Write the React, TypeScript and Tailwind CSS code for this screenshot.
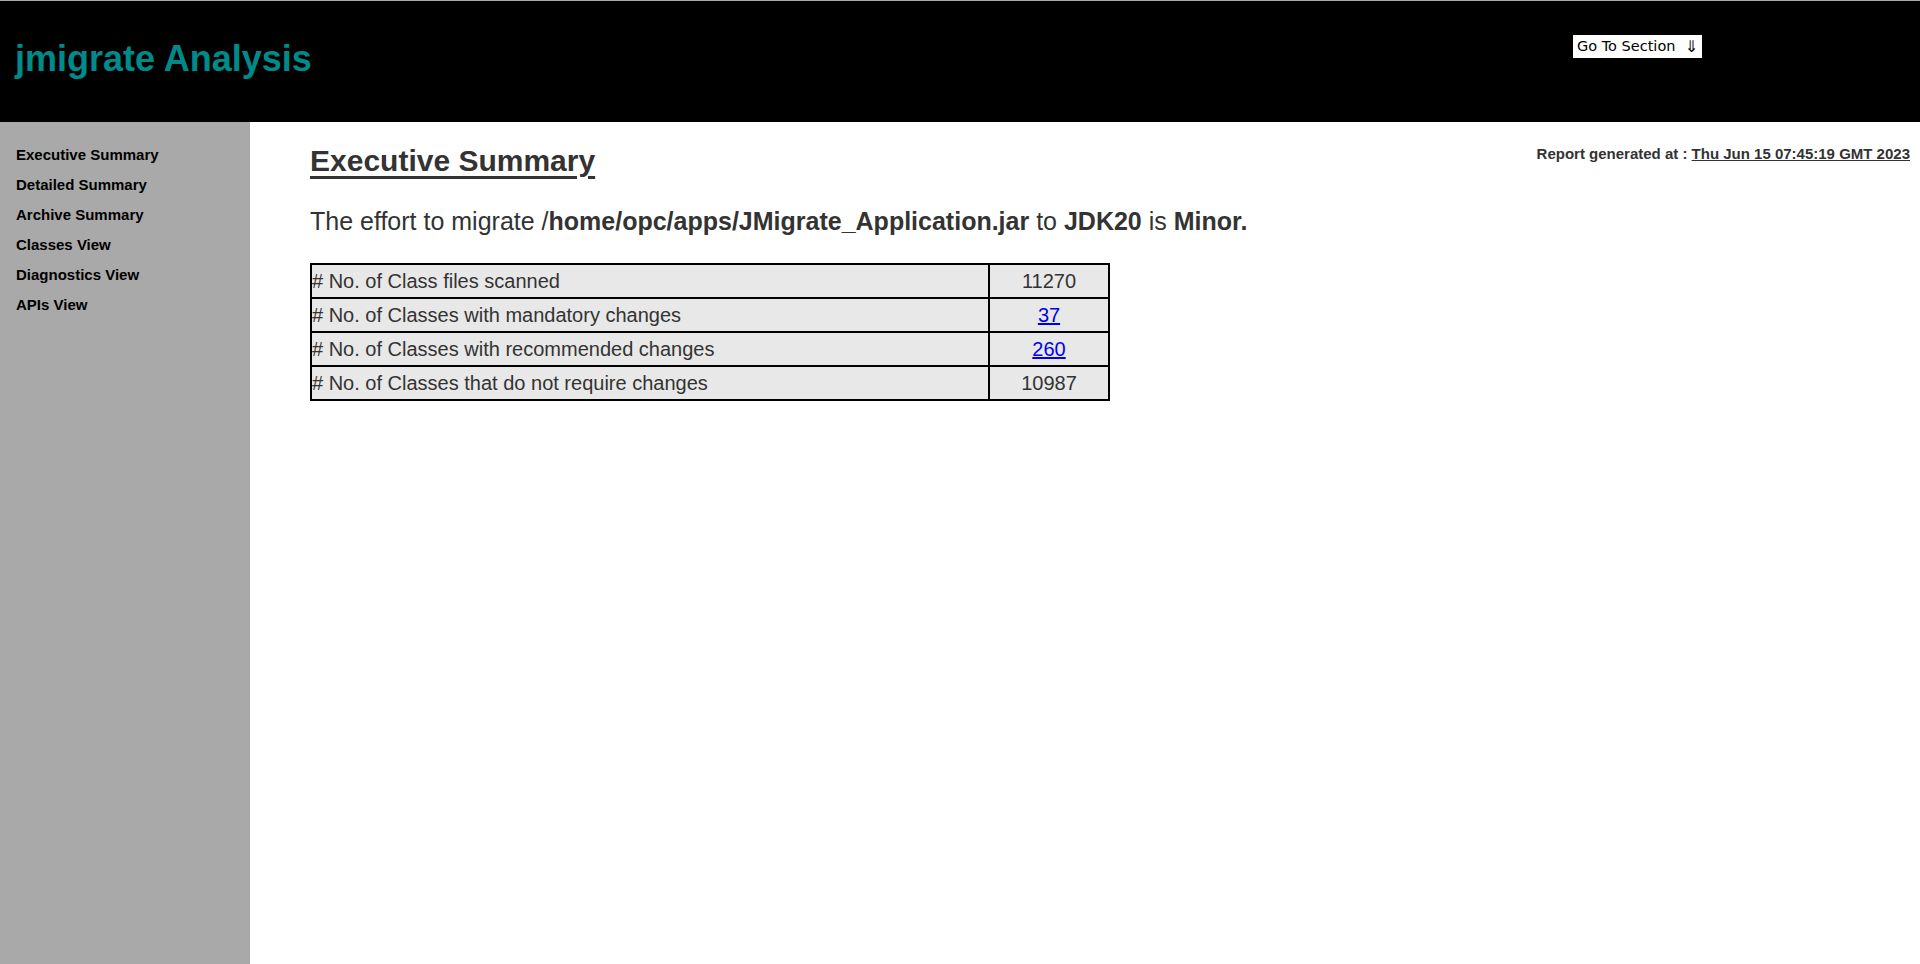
import React from 'react'

const navItems = [
  'Executive Summary',
  'Detailed Summary',
  'Archive Summary',
  'Classes View',
  'Diagnostics View',
  'APIs View',
]

const rows: { label: string; value: string; link?: boolean }[] = [
  { label: '# No. of Class files scanned', value: '11270' },
  { label: '# No. of Classes with mandatory changes', value: '37', link: true },
  { label: '# No. of Classes with recommended changes', value: '260', link: true },
  { label: '# No. of Classes that do not require changes', value: '10987' },
]

const App = () => {
  return (
    <div className="w-[1920px] h-[964px] flex flex-col overflow-hidden bg-white font-['Liberation_Sans',Arial,sans-serif]">
      {/* header */}
      <div className="h-[122px] bg-black border-t border-[#a9a9a9] flex items-start px-[15px] pt-[36px] shrink-0">
        <h1 className="text-[36px] leading-[43px] font-bold text-[#008b8b]">jmigrate Analysis</h1>
        <div className="ml-auto mr-[203px] -mt-[2px] h-[23px] w-[129px] bg-white flex items-center pl-[4px] font-['DejaVu_Sans',sans-serif] text-[14.5px] font-normal text-black whitespace-pre">
          {'Go To Section  '}
          <span className="text-[16px] leading-[16px]">{'\u21d3'}</span>
        </div>
      </div>

      <div className="flex flex-1 min-h-0">
        {/* sidebar */}
        <div className="w-[250px] shrink-0 bg-[#a9a9a9] pt-[18px] pl-[16px]">
          {navItems.map((item) => (
            <div key={item} className="text-[15px] leading-[30px] font-bold text-black">
              {item}
            </div>
          ))}
        </div>

        {/* main */}
        <div className="flex-1 pl-[60px] pr-[10px] pt-[21px] text-[#333333]">
          <div className="flex justify-between items-start">
            <h2 className="text-[30px] leading-[36px] font-bold underline underline-offset-[5px]">Executive Summary</h2>
            <div className="mt-[2px] text-[15px] leading-[18px] font-bold">
              Report generated at : <span className="underline">Thu Jun 15 07:45:19 GMT 2023</span>
            </div>
          </div>

          <p className="mt-[28px] text-[25px] leading-[28px]">
            The effort to migrate /<b>home/opc/apps/JMigrate_Application.jar</b> to <b>JDK20</b> is <b>Minor.</b>
          </p>

          <table className="mt-[28px] w-[800px] border-collapse border-2 border-black text-[20px] leading-[22px]">
            <tbody>
              {rows.map((r) => (
                <tr key={r.label} className="bg-[#e8e8e8]">
                  <td className="border-2 border-black w-[678px] py-[5px] px-0 text-left">{r.label}</td>
                  <td className="border-2 border-black py-[5px] px-0 text-center">
                    {r.link ? <span className="text-[#0000ee] underline">{r.value}</span> : r.value}
                  </td>
                </tr>
              ))}
            </tbody>
          </table>
        </div>
      </div>
    </div>
  )
}

export default App
